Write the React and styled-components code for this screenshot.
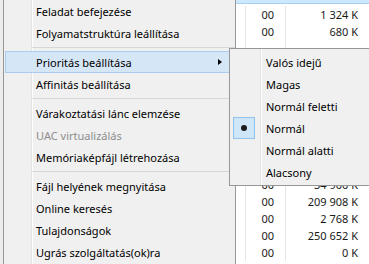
import React from 'react';
import styled, { createGlobalStyle } from 'styled-components';

const Global = createGlobalStyle`
  html, body { margin: 0; padding: 0; background: #fff; overflow: hidden; }
  body { font-family: "Noto Sans", "Open Sans", sans-serif; font-size: 11px; color: #000; }
`;

const Screen = styled.div`
  position: relative;
  display: flex;
  width: 369px;
  height: 264px;
  overflow: hidden;
  background: #fff;
`;

const Edge = styled.div`
  width: 3px;
  background: #ececec;
`;

const Menu = styled.div`
  width: 231px;
  flex: none;
  border-left: 1px solid #979797;
  border-right: 1px solid #979797;
  background:
    linear-gradient(to right, transparent 27px, #e2e3e3 27px, #e2e3e3 28px, #fff 28px, #fff 29px, transparent 29px),
    #f0f0f0;
  display: flex;
  flex-direction: column;
`;

const Item = styled.div`
  position: relative;
  height: 22px;
  box-sizing: border-box;
  margin: 0 1px;
  padding-left: ${p => p.$indent || 30}px;
  display: flex;
  align-items: center;
  white-space: nowrap;
  color: ${p => (p.$disabled ? '#8d8d8d' : '#000')};
  border: 1px solid ${p => (p.$hot ? '#a8cdef' : 'transparent')};
  background: ${p => (p.$hot ? '#d5e6f7' : 'transparent')};
`;

const Separator = styled.div`
  height: 7px;
  margin-left: 27px;
  display: flex;
  align-items: center;
  &::after {
    content: '';
    flex: 1;
    height: 1px;
    background: #d7d7d7;
  }
`;

const Arrow = styled.span`
  position: absolute;
  right: 11px;
  top: 7px;
  width: 0;
  height: 0;
  border-top: 3.5px solid transparent;
  border-bottom: 3.5px solid transparent;
  border-left: 4px solid #000;
`;

const SubMenu = styled.div`
  position: absolute;
  left: 229px;
  top: 48px;
  width: 170px;
  padding: 2px 0;
  border: 1px solid #979797;
  background:
    linear-gradient(to right, transparent 30px, #e2e3e3 30px, #e2e3e3 31px, #fff 31px, #fff 32px, transparent 32px),
    #f0f0f0;
  display: flex;
  flex-direction: column;
`;

const Check = styled.span`
  position: absolute;
  left: 1px;
  top: -1px;
  width: 22px;
  height: 22px;
  box-sizing: border-box;
  border: 1px solid #8fc2ec;
  background: #cfe5f8;
  display: flex;
  align-items: center;
  justify-content: center;
  &::after {
    content: '';
    width: 6px;
    height: 6px;
    border-radius: 50%;
    background: #1a1a1a;
  }
`;

const List = styled.div`
  flex: 1;
  display: flex;
  flex-direction: column;
  background: #fff;
`;

const SelectedTail = styled.div`
  height: 3px;
  background: #cce8ff;
  border-bottom: 1px solid #a6d3f5;
  margin-bottom: 2px;
`;

const Row = styled.div`
  height: 17px;
  flex: none;
  display: flex;
  align-items: center;
`;

const Cell = styled.div`
  height: 100%;
  box-sizing: border-box;
  display: flex;
  align-items: center;
  justify-content: flex-end;
  width: ${p => (p.$w ? p.$w + 'px' : 'auto')};
  flex: ${p => (p.$w ? 'none' : '1')};
  padding-right: ${p => p.$pad || 0}px;
  border-right: ${p => (p.$line ? '1px solid #e5e5e5' : 'none')};
  color: #1a1a1a;
  white-space: nowrap;
`;

// rows hidden behind the submenu carry no text
const memory = [
  '1 324 K', '680 K', '', '', '', '', '', '', '', '',
  '34 900 K', '209 908 K', '2 768 K', '250 652 K', '0 K',
];

const mainItems = [
  { t: 'Feladat befejezése' },
  { t: 'Folyamatstruktúra leállítása' },
  { sep: true },
  { t: 'Prioritás beállítása', hot: true, sub: true },
  { t: 'Affinitás beállítása' },
  { sep: true },
  { t: 'Várakoztatási lánc elemzése' },
  { t: 'UAC virtualizálás', disabled: true },
  { t: 'Memóriaképfájl létrehozása' },
  { sep: true },
  { t: 'Fájl helyének megnyitása' },
  { t: 'Online keresés' },
  { t: 'Tulajdonságok' },
  { t: 'Ugrás szolgáltatás(ok)ra' },
];

const priorities = ['Valós idejű', 'Magas', 'Normál feletti', 'Normál', 'Normál alatti', 'Alacsony'];

export default function App() {
  return (
    <>
      <Global />
      <Screen>
        <Edge />
        <Menu>
          {mainItems.map((it, i) =>
            it.sep ? (
              <Separator key={i} />
            ) : (
              <Item key={i} $hot={it.hot} $disabled={it.disabled}>
                {it.t}
                {it.sub && <Arrow />}
              </Item>
            )
          )}
        </Menu>
        <List>
          <SelectedTail />
          {memory.map((m, i) => (
            <Row key={i}>
              <Cell $w={10} $line />
              <Cell $w={40} $pad={11} $line>{m ? '00' : ''}</Cell>
              <Cell $pad={11}>{m}</Cell>
            </Row>
          ))}
        </List>
        <SubMenu>
          {priorities.map(p => (
            <Item key={p} $indent={34}>
              {p === 'Normál' && <Check />}
              {p}
            </Item>
          ))}
        </SubMenu>
      </Screen>
    </>
  );
}
